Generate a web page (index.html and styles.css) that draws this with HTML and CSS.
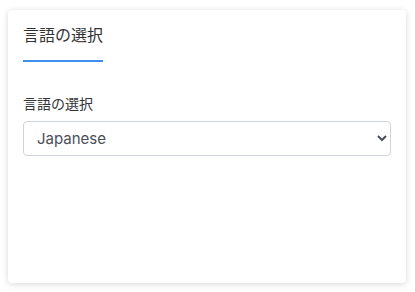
FILE: index.html
```html
<!DOCTYPE html>
<html lang="ja">
<head>
<meta charset="utf-8">
<link rel="stylesheet" href="styles.css">
</head>
<body>
<div class="page">
  <div class="card">
    <div class="tabs">
      <div class="tab active">言語の選択</div>
    </div>
    <div class="form-group">
      <label class="label" for="lang">言語の選択</label>
      <select id="lang" class="select">
        <option>Japanese</option>
        <option>English</option>
      </select>
    </div>
  </div>
</div>
</body>
</html>
```
FILE: styles.css
```css
html, body {
  margin: 0;
  padding: 0;
  background: #ffffff;
}
body {
  font-family: "Inter", "Noto Sans CJK JP", sans-serif;
  color: #333333;
}
.page {
  padding: 10px 9px 9px 8px;
}
.card {
  height: 273px;
  box-sizing: border-box;
  background: #ffffff;
  border-radius: 4px;
  box-shadow: 0 1px 6px rgba(0, 0, 0, 0.16);
  padding: 0 15px;
}
.tabs {
  display: flex;
}
.tab {
  font-family: "Noto Sans CJK JP", sans-serif;
  font-size: 16px;
  line-height: 24px;
  padding: 12px 0 14px;
  color: #333333;
}
.tab.active {
  border-bottom: 2px solid #3d8ff0;
}
.form-group {
  display: flex;
  flex-direction: column;
  margin-top: 31px;
}
.label {
  font-family: "Noto Sans CJK JP", sans-serif;
  font-size: 14px;
  line-height: 20px;
  color: #333333;
  margin-bottom: 8px;
}
.select {
  height: 35px;
  border: 1px solid #ced4da;
  border-radius: 4px;
  background: #ffffff;
  color: #495057;
  font-family: "Inter", sans-serif;
  font-size: 15px;
  padding: 0 8px 0 9px;
}
```
